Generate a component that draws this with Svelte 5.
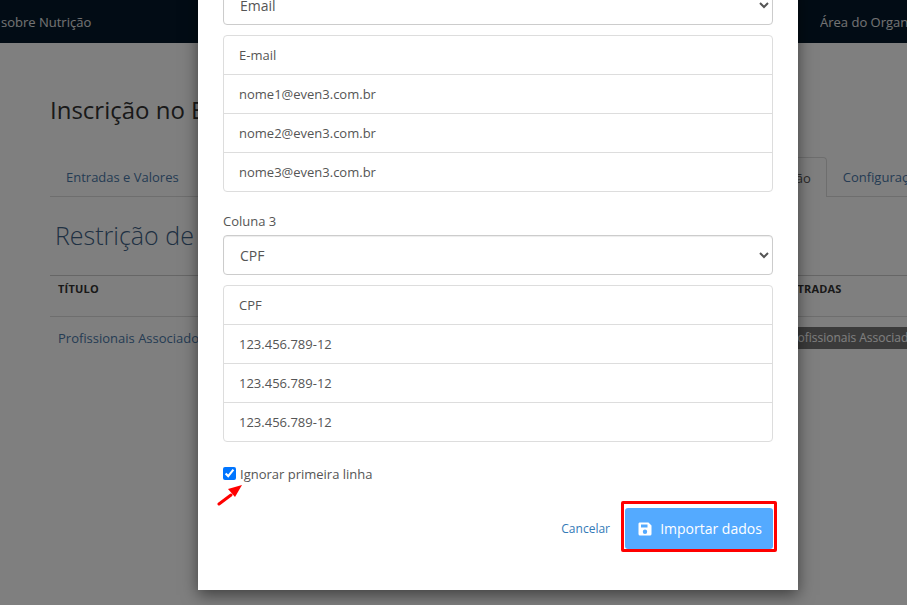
<script>
  const columns = [
    { label: null, selected: 'Email', rows: ['E-mail', 'nome1@even3.com.br', 'nome2@even3.com.br', 'nome3@even3.com.br'] },
    { label: 'Coluna 3', selected: 'CPF', rows: ['CPF', '123.456.789-12', '123.456.789-12', '123.456.789-12'] }
  ];
</script>

<div class="page">
  <header class="topbar">
    <span class="event-name">sobre Nutrição</span>
    <span class="org-area">Área do Organizador</span>
  </header>

  <main class="content">
    <h1>Inscrição no Evento</h1>
    <nav class="tabs">
      <a class="tab first" href="#valores">Entradas e Valores</a>
      <span class="tab active">Restrição</span>
      <a class="tab" href="#config">Configurações</a>
    </nav>
    <h2>Restrição de Entradas</h2>
    <div class="table-head">
      <span>TÍTULO</span>
      <span class="right-col">ENTRADAS</span>
    </div>
    <div class="table-row">
      <a href="#prof">Profissionais Associados</a>
      <span class="tag">Profissionais Associados</span>
    </div>
  </main>

  <div class="backdrop"></div>

  <div class="modal-wrap">
    <div class="modal">
      {#each columns as col}
        <section class="column">
          {#if col.label}
            <label class="col-label" for="col-select">{col.label}</label>
          {/if}
          <select id="col-select" class="col-select">
            <option>{col.selected}</option>
          </select>
          <ul class="preview">
            {#each col.rows as row}
              <li>{row}</li>
            {/each}
          </ul>
        </section>
      {/each}

      <div class="ignore-wrap">
        <label class="ignore">
          <input type="checkbox" checked />
          <span>Ignorar primeira linha</span>
        </label>
        <svg class="arrow" width="28" height="24" viewBox="0 0 28 24">
          <path d="M3 22 L15 13" stroke="#ff0000" stroke-width="3" stroke-linecap="round" />
          <path d="M26 3 L12 7 L19 15 Z" fill="#ff0000" />
        </svg>
      </div>

      <div class="actions">
        <a class="cancel" href="#cancel">Cancelar</a>
        <div class="highlight">
          <button class="import">
            <svg width="14" height="14" viewBox="0 0 14 14">
              <path fill="#fff" fill-rule="evenodd" d="M1.5 0.5 H10.5 L13.5 3.5 V12 A1.5 1.5 0 0 1 12 13.5 H2 A1.5 1.5 0 0 1 0.5 12 V2 A1.5 1.5 0 0 1 1.5 0.5 Z M3 2.5 V5.5 H9.5 V2.5 Z M7 7.5 A2.2 2.2 0 1 0 7 11.9 A2.2 2.2 0 1 0 7 7.5 Z" />
            </svg>
            Importar dados
          </button>
        </div>
      </div>
    </div>
  </div>
</div>

<style>
  :global(body) {
    margin: 0;
    font-family: "Open Sans", "Liberation Sans", sans-serif;
  }

  .page {
    position: relative;
    width: 907px;
    height: 605px;
    overflow: hidden;
    background: #fff;
  }

  .topbar {
    height: 43px;
    background: #05192b;
    color: #e6e6e6;
    font-size: 13px;
    display: flex;
    justify-content: space-between;
    align-items: center;
    white-space: nowrap;
    padding-left: 1px;
    overflow: hidden;
  }

  .org-area {
    width: 87px;
    overflow: hidden;
  }

  .content {
    padding: 50px 0 0 50px;
    color: #333;
  }

  h1 {
    margin: 0;
    font-size: 24px;
    font-weight: 400;
    line-height: 34px;
  }

  .tabs {
    display: flex;
    margin-top: 30px;
    height: 39px;
    border-bottom: 1px solid #ddd;
    font-size: 13px;
    align-items: stretch;
  }

  .tab {
    display: flex;
    align-items: center;
    padding: 0 16px;
    color: #4a78a8;
    text-decoration: none;
    white-space: nowrap;
  }

  .tab.first {
    margin-right: 559px;
  }

  .tab.active {
    color: #555;
    background: #fff;
    border: 1px solid #ddd;
    border-bottom: 0;
    border-radius: 4px 4px 0 0;
    margin-bottom: -1px;
    padding: 0 15px 0 0;
    width: 90px;
    justify-content: flex-end;
  }

  h2 {
    margin: 20px 0 0 5px;
    font-size: 25px;
    font-weight: 300;
    line-height: 37px;
    color: #3f6286;
    white-space: nowrap;
  }

  .table-head {
    display: flex;
    margin-top: 21px;
    height: 42px;
    box-sizing: border-box;
    border-top: 1px solid #ccc;
    border-bottom: 1px solid #ddd;
    padding: 5px 8px 0;
    font-size: 11px;
    font-weight: 700;
    line-height: 15px;
    letter-spacing: 0.2px;
    white-space: nowrap;
  }

  .right-col {
    margin-left: 683px;
  }

  .table-row {
    display: flex;
    align-items: center;
    height: 42px;
    padding-left: 8px;
    font-size: 13px;
    white-space: nowrap;
  }

  .table-row a {
    color: #4a78a8;
    text-decoration: none;
  }

  .tag {
    margin-left: 572px;
    background: #777;
    color: #fff;
    padding: 2px 8px;
    font-size: 12px;
    line-height: 18px;
  }

  .backdrop {
    position: absolute;
    inset: 0;
    background: rgba(0, 0, 0, 0.5);
  }

  .modal-wrap {
    position: absolute;
    inset: 0;
    display: flex;
    align-items: flex-end;
    padding: 0 0 15px 198px;
    box-sizing: border-box;
  }

  .modal {
    width: 600px;
    box-sizing: border-box;
    background: #fff;
    padding: 0 25px 38px;
    box-shadow: 0 5px 15px rgba(0, 0, 0, 0.5);
    color: #555;
    font-size: 13px;
  }

  .column {
    display: flex;
    flex-direction: column;
    margin-bottom: 20px;
  }

  .col-label {
    line-height: 18px;
    margin-bottom: 5px;
    height: 18px;
  }

  .col-select {
    height: 40px;
    background: #fff;
    border: 1px solid #ccc;
    border-radius: 4px;
    padding: 0 12px;
    font: inherit;
    font-size: 14px;
    color: #555;
    box-shadow: inset 0 1px 1px rgba(0, 0, 0, 0.075);
  }

  .preview {
    list-style: none;
    margin: 10px 0 0;
    padding: 0;
    border: 1px solid #ddd;
    border-radius: 4px;
  }

  .preview li {
    height: 39px;
    line-height: 38px;
    box-sizing: border-box;
    padding-left: 15px;
    border-bottom: 1px solid #ddd;
  }

  .preview li:last-child {
    height: 38px;
    border-bottom: 0;
  }

  .ignore-wrap {
    position: relative;
    margin-top: 22px;
  }

  .ignore {
    display: flex;
    align-items: center;
    gap: 4px;
    height: 18px;
  }

  .ignore input {
    margin: 0;
    width: 13px;
    height: 13px;
  }

  .ignore span {
    margin-top: 2px;
  }

  .arrow {
    position: absolute;
    left: -7px;
    top: 18px;
  }

  .actions {
    display: flex;
    justify-content: flex-end;
    align-items: center;
    margin-top: 19px;
    margin-right: -4px;
  }

  .cancel {
    color: #337ab7;
    font-size: 12px;
    text-decoration: none;
    margin: 4px 11px 0 0;
  }

  .highlight {
    border: 3px solid #ff0000;
    border-radius: 2px;
    padding: 4px 1px 0;
    height: 51px;
    box-sizing: border-box;
    width: 156px;
  }

  .import {
    width: 148px;
    height: 41px;
    border: 0;
    border-radius: 3px;
    background: #54aaff;
    color: #fff;
    font: inherit;
    font-size: 14px;
    font-weight: 500;
    display: flex;
    align-items: center;
    justify-content: center;
    gap: 8px;
    padding: 0 0 0 2px;
  }
</style>
